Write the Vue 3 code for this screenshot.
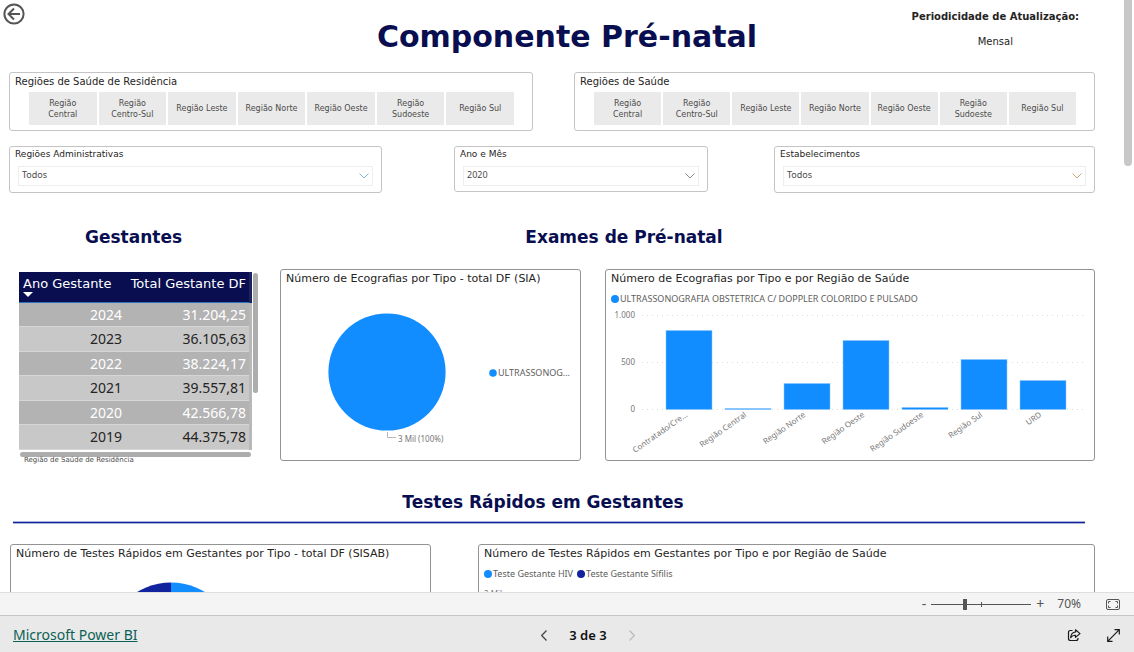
<script setup>
import { ref } from 'vue'

const regions = [
  'Região Central', 'Região Centro-Sul', 'Região Leste', 'Região Norte',
  'Região Oeste', 'Região Sudoeste', 'Região Sul'
]
const regionSlicers = [
  { id: 'residence', title: 'Regiões de Saúde de Residência' },
  { id: 'health', title: 'Regiões de Saúde' }
]
const dropdowns = [
  { id: 'admin', title: 'Regiões Administrativas', value: 'Todos', color: '#7fb6dc' },
  { id: 'period', title: 'Ano e Mês', value: '2020', color: '#8a8a8a' },
  { id: 'place', title: 'Estabelecimentos', value: 'Todos', color: '#c9a673' }
]
const rows = [
  ['2024', '31.204,25'],
  ['2023', '36.105,63'],
  ['2022', '38.224,17'],
  ['2021', '39.557,81'],
  ['2020', '42.566,78'],
  ['2019', '44.375,78']
]
const bars = [
  { label: 'Contratado/Cre...', height: 79 },
  { label: 'Região Central', height: 1 },
  { label: 'Região Norte', height: 26 },
  { label: 'Região Oeste', height: 69 },
  { label: 'Região Sudoeste', height: 2 },
  { label: 'Região Sul', height: 50 },
  { label: 'URD', height: 29 }
].map((b, i) => ({ ...b, x: 60 + i * 59 }))
const ticks = [
  { label: '1.000', y: 9 },
  { label: '500', y: 56 },
  { label: '0', y: 103 }
]
const zoom = ref(33)
</script>

<template>
  <div class="viewer">
    <main class="canvas">
      <header class="top">
        <button class="back" aria-label="Voltar">
          <svg width="22" height="22" viewBox="0 0 22 22" fill="none" stroke="#555" stroke-width="2">
            <circle cx="11" cy="11" r="9.6" />
            <path d="M17 11H6M11 5.5 5.5 11l5.5 5.5" />
          </svg>
        </button>
        <h1>Componente Pré-natal</h1>
        <div class="update">
          <strong>Periodicidade de Atualização:</strong>
          <span>Mensal</span>
        </div>
      </header>

      <div class="slicers">
        <section v-for="s in regionSlicers" :key="s.id" class="box">
          <h3>{{ s.title }}</h3>
          <div class="tiles">
            <button v-for="r in regions" :key="r">{{ r }}</button>
          </div>
        </section>
      </div>

      <div class="filters">
        <section v-for="d in dropdowns" :key="d.id" class="box" :class="d.id">
          <label :for="d.id">{{ d.title }}</label>
          <div class="select">
            <select :id="d.id"><option>{{ d.value }}</option></select>
            <svg width="10" height="6" viewBox="0 0 10 6" fill="none" :stroke="d.color"><path d="M.5.5 5 5 9.5.5" /></svg>
          </div>
        </section>
      </div>

      <div class="exams">
        <h2 class="h-gest">Gestantes</h2>
        <h2 class="h-exam">Exames de Pré-natal</h2>

        <section class="gest">
          <div class="table-area">
            <table>
              <thead>
                <tr>
                  <th>Ano Gestante<svg width="10" height="5" viewBox="0 0 10 5"><path d="M0 0h10L5 5z" fill="#fff" /></svg></th>
                  <th>Total Gestante DF</th>
                </tr>
              </thead>
              <tbody>
                <tr v-for="r in rows" :key="r[0]"><td>{{ r[0] }}</td><td>{{ r[1] }}</td></tr>
              </tbody>
            </table>
            <div class="vbar"></div>
          </div>
          <div class="hbar"></div>
          <p>Região de Saúde de Residência</p>
        </section>

        <section class="card pie">
          <h3>Número de Ecografias por Tipo - total DF (SIA)</h3>
          <svg class="plot" viewBox="0 0 299 172">
            <circle cx="106" cy="85" r="58.6" fill="#118dff" />
            <path d="M106.5 145v5.500h8.500" fill="none" stroke="#b8b8b8" />
            <text x="117" y="155" class="muted">3 Mil (100%)</text>
            <circle cx="212" cy="86" r="3.800" fill="#118dff" />
            <text x="217" y="89" class="legend-text">ULTRASSONOG...</text>
          </svg>
        </section>

        <section class="card bar">
          <h3>Número de Ecografias por Tipo e por Região de Saúde</h3>
          <div class="legend"><i class="dot"></i>ULTRASSONOGRAFIA OBSTETRICA C/ DOPPLER COLORIDO E PULSADO</div>
          <svg class="plot" viewBox="0 0 488 152">
            <g v-for="t in ticks" :key="t.label">
              <line x1="36" x2="479" :y1="t.y - .5" :y2="t.y - .5" stroke="#dcdcdc" stroke-dasharray="1 4" />
              <text x="29" :y="t.y + 2" text-anchor="end" class="muted">{{ t.label }}</text>
            </g>
            <g v-for="b in bars" :key="b.label">
              <rect :x="b.x" :y="102.5 - b.height" width="46" :height="b.height" fill="#118dff" stroke="#8cc6ff" stroke-width=".5" />
              <text :transform="`translate(${b.x + 22} 109) rotate(-35)`" text-anchor="end" class="muted">{{ b.label }}</text>
            </g>
          </svg>
        </section>
      </div>

      <h2 class="h-tests">Testes Rápidos em Gestantes</h2>
      <hr>

      <div class="tests">
        <section class="card">
          <h3>Número de Testes Rápidos em Gestantes por Tipo - total DF (SISAB)</h3>
          <svg class="plot" viewBox="0 0 419 172">
            <path d="M160 20.500a65 65 0 0 0 0 130z" fill="#12239e" />
            <path d="M160 20.500a65 65 0 0 1 0 130z" fill="#118dff" />
          </svg>
        </section>
        <section class="card">
          <h3>Número de Testes Rápidos em Gestantes por Tipo e por Região de Saúde</h3>
          <div class="legend"><i class="dot"></i>Teste Gestante HIV<i class="dot dark"></i>Teste Gestante Sífilis</div>
          <div class="scale">2 Mil</div>
        </section>
      </div>
      <div class="scroll"></div>
    </main>

    <div class="zoombar">
      <button aria-label="Reduzir">-</button>
      <input v-model="zoom" type="range" min="0" max="100" aria-label="Zoom">
      <button aria-label="Ampliar">+</button>
      <output>70%</output>
      <button class="fit" aria-label="Ajustar à página">
        <svg width="14" height="11" viewBox="0 0 14 11" fill="none" stroke="#555">
          <rect x=".5" y=".5" width="13" height="10" rx="1.500" />
          <path d="M2.500 4.500v-2h2M9.500 2.500h2v2M11.500 6.500v2h-2M4.500 8.500h-2v-2" />
        </svg>
      </button>
    </div>

    <footer class="nav">
      <a href="#">Microsoft Power BI</a>
      <div class="pager">
        <button aria-label="Página anterior">
          <svg width="6" height="11" viewBox="0 0 6 11" fill="none" stroke="#444" stroke-width="1.200"><path d="M5.500.5.7 5.500l4.800 5" /></svg>
        </button>
        <span>3 de 3</span>
        <button aria-label="Próxima página" disabled>
          <svg width="6" height="11" viewBox="0 0 6 11" fill="none" stroke="#bbb" stroke-width="1.200"><path d="m.5.5 4.800 5-4.800 5" /></svg>
        </button>
      </div>
      <div class="actions">
        <button aria-label="Compartilhar">
          <svg width="14" height="13" viewBox="0 0 14 13" fill="none" stroke="#1b1b1b" stroke-width="1.200" stroke-linejoin="round">
            <path d="M5.500 1.500H3.500q-2 0-2 2v6q0 2 2 2h5.500q2 0 2-2V9" />
            <path d="M8.500.8 13 4.600 8.500 8.400V6.300Q5.500 6 3.700 8.700 4 3.500 8.500 3z" />
          </svg>
        </button>
        <button aria-label="Tela inteira">
          <svg width="13" height="13" viewBox="0 0 13 13" fill="none" stroke="#1b1b1b" stroke-width="1.200">
            <path d="M7.500.7h4.800v4.800M12.300.7.7 12.300M.7 7.500v4.800h4.800" />
          </svg>
        </button>
      </div>
    </footer>
  </div>
</template>

<style>
body { margin: 0; }
</style>

<style scoped>
* { box-sizing: border-box; }
h1, h2, h3, p { margin: 0; font-weight: 400; }
button { border: 0; padding: 0; background: none; font: inherit; color: inherit; }
svg { display: block; }
.viewer {
  height: 100vh;
  display: flex;
  flex-direction: column;
  font-family: "DejaVu Sans", Verdana, sans-serif;
  color: #252423;
  background: #fff;
}
.canvas {
  position: relative;
  flex: 1;
  min-height: 0;
  overflow: hidden;
  padding: 0 39px 0 9px;
}
.top {
  display: grid;
  grid-template-columns: 1fr auto 1fr;
  height: 72px;
  margin-right: -30px;
}
.back { width: 22px; height: 22px; margin: 3px 0 0 -6px; }
h1, h2 { font-weight: 700; color: #080e50; }
h1 { font-size: 30px; line-height: 34px; padding-top: 20px; }
.update {
  justify-self: end;
  display: flex;
  flex-direction: column;
  align-items: center;
  gap: 12px;
  padding: 10px 46px 0 0;
  font-size: 10px;
  line-height: 13px;
}
.box { border: 1px solid #c4c4c4; border-radius: 3px; }
.slicers { display: grid; grid-template-columns: 524fr 521fr; column-gap: 41px; }
.slicers .box { height: 59px; padding: 2px 18px 0 5px; }
.slicers h3 { font-size: 10px; line-height: 14px; }
.tiles { display: grid; grid-template-columns: repeat(7, 1fr); gap: 2px; margin: 3px 0 0 14px; }
.tiles button {
  height: 33px;
  padding: 0 5px;
  background: #eaeaea;
  font-size: 8px;
  line-height: 11px;
  color: #4c4b4a;
}
.filters {
  display: grid;
  grid-template-columns: 373fr 72fr 254fr 66fr 321fr;
  margin-top: 15px;
}
.filters .box { height: 47px; padding: 0 8px 0 5px; }
.filters .period { grid-column: 3; height: 46px; }
.filters .place { grid-column: 5; }
.filters label { display: block; font-size: 9px; line-height: 14px; }
.select { position: relative; margin: 5px 0 0 3px; }
select {
  appearance: none;
  display: block;
  width: 100%;
  height: 20px;
  padding: 0 3px 2px;
  border: 1px solid #eee;
  border-radius: 0;
  background: #fff;
  font: 9px/16px "Noto Sans", "Open Sans", sans-serif;
  color: #4c4b4a;
}
.select svg { position: absolute; right: 4px; top: 7px; }

.exams {
  display: grid;
  grid-template-columns: 247fr 301fr 490fr;
  column-gap: 24px;
  align-items: start;
  margin-top: 34px;
}
h2 { font-size: 17px; line-height: 20px; text-align: center; }
.exams h2 { margin-bottom: 22px; }
.h-gest { padding-left: 2px; }
.h-exam { grid-column: 2 / 4; padding-right: 127px; }
.card { border: 1px solid #939393; border-radius: 3px; min-height: 192px; overflow: hidden; }
.card h3 { font-size: 11px; line-height: 17px; padding-left: 5px; white-space: nowrap; }
.plot { width: 100%; }
.legend {
  display: flex;
  align-items: center;
  padding: 4px 0 0 5px;
  font: 9px/16px "Noto Sans", "Open Sans", sans-serif;
  color: #605e5c;
  white-space: nowrap;
}
.dot { width: 8px; height: 8px; margin-right: 1px; border-radius: 50%; background: #118dff; }
.legend .dark { margin-left: 4px; background: #12239e; }
text { font-family: "Noto Sans", "Open Sans", sans-serif; font-size: 8px; }
.muted { fill: #777; }
.legend-text { font-size: 9px; fill: #605e5c; }

.gest { margin-right: -2px; padding: 3px 0 0 10px; }
.table-area { display: flex; gap: 1px; }
table { flex: 1; border-collapse: collapse; }
th {
  height: 30px;
  padding: 4px 4px 0;
  background: #080e50;
  border-bottom: 1px solid #2f6fc0;
  color: #fff;
  font-size: 13px;
  line-height: 16px;
  font-weight: 400;
  text-align: left;
  vertical-align: top;
  white-space: nowrap;
}
th + th, td + td { padding-right: 3px; text-align: right; border-right: 3px solid #b8b8b8; }
th + th { padding-left: 0; border-right-color: #1d2360; }
td {
  height: 24px;
  padding: 1px 4px 0;
  background: #b3b3b3;
  border-bottom: 1px solid #d6d6d6;
  color: #fff;
  font: 14px/22px "Noto Sans", "Open Sans", sans-serif;
  text-align: right;
}
td:first-child { width: 107px; }
tr:nth-child(even) td { height: 25px; background: #c8c8c8; color: #252423; }
.vbar { width: 5px; height: 120px; margin-top: 1px; border-radius: 3px; background: #adadad; }
.hbar { height: 5px; margin: 2px 7px 0 1px; border-radius: 3px; background: #adadad; }
.gest p { padding-left: 5px; font-size: 7px; line-height: 7px; color: #4c4b4a; }

.h-tests { margin-top: 28px; padding-right: 18px; }
hr {
  height: 3px;
  margin: 9px 10px 0 4px;
  border: 1px solid #a9b0d8;
  border-width: 1px 0;
  background: #12239e;
}
.tests {
  display: grid;
  grid-template-columns: 421fr 617fr;
  column-gap: 47px;
  margin: 20px 0 0 1px;
}
.scale { padding: 6px 0 0 5px; font: 8px/12px "Noto Sans", sans-serif; color: #777; }
.scroll {
  position: absolute;
  top: -4px;
  right: 2px;
  width: 8px;
  height: 170px;
  border-radius: 4px;
  background: #c8c8c8;
}

.zoombar {
  display: flex;
  align-items: center;
  justify-content: flex-end;
  height: 23px;
  padding-right: 14px;
  border-top: 1px solid #dedede;
  background: #f4f4f4;
  font: 14px/16px "Noto Sans", "Open Sans", sans-serif;
  color: #555;
}
.zoombar input {
  appearance: none;
  width: 100px;
  height: 11px;
  margin: 0 5px;
  background:
    linear-gradient(#555, #555) center / 1px 5px no-repeat,
    linear-gradient(#555, #555) center / 100% 1px no-repeat;
}
.zoombar input::-webkit-slider-thumb {
  appearance: none;
  width: 4px;
  height: 11px;
  background: #555;
}
.zoombar output { margin: 0 25px 0 13px; font-size: 12px; }
.nav {
  display: grid;
  grid-template-columns: 1fr auto 1fr;
  align-items: center;
  height: 37px;
  padding: 2px 14px 0 13px;
  border-top: 1px solid #c6c6c6;
  background: #e9e9e9;
  font: 14px/20px "Noto Sans", "Open Sans", sans-serif;
}
.nav a { justify-self: start; color: #0b6156; }
.pager { display: flex; align-items: center; gap: 22px; padding-left: 43px; color: #111; }
.pager span { font-weight: 600; font-size: 13px; }
.actions { display: flex; gap: 26px; justify-self: end; }
</style>
